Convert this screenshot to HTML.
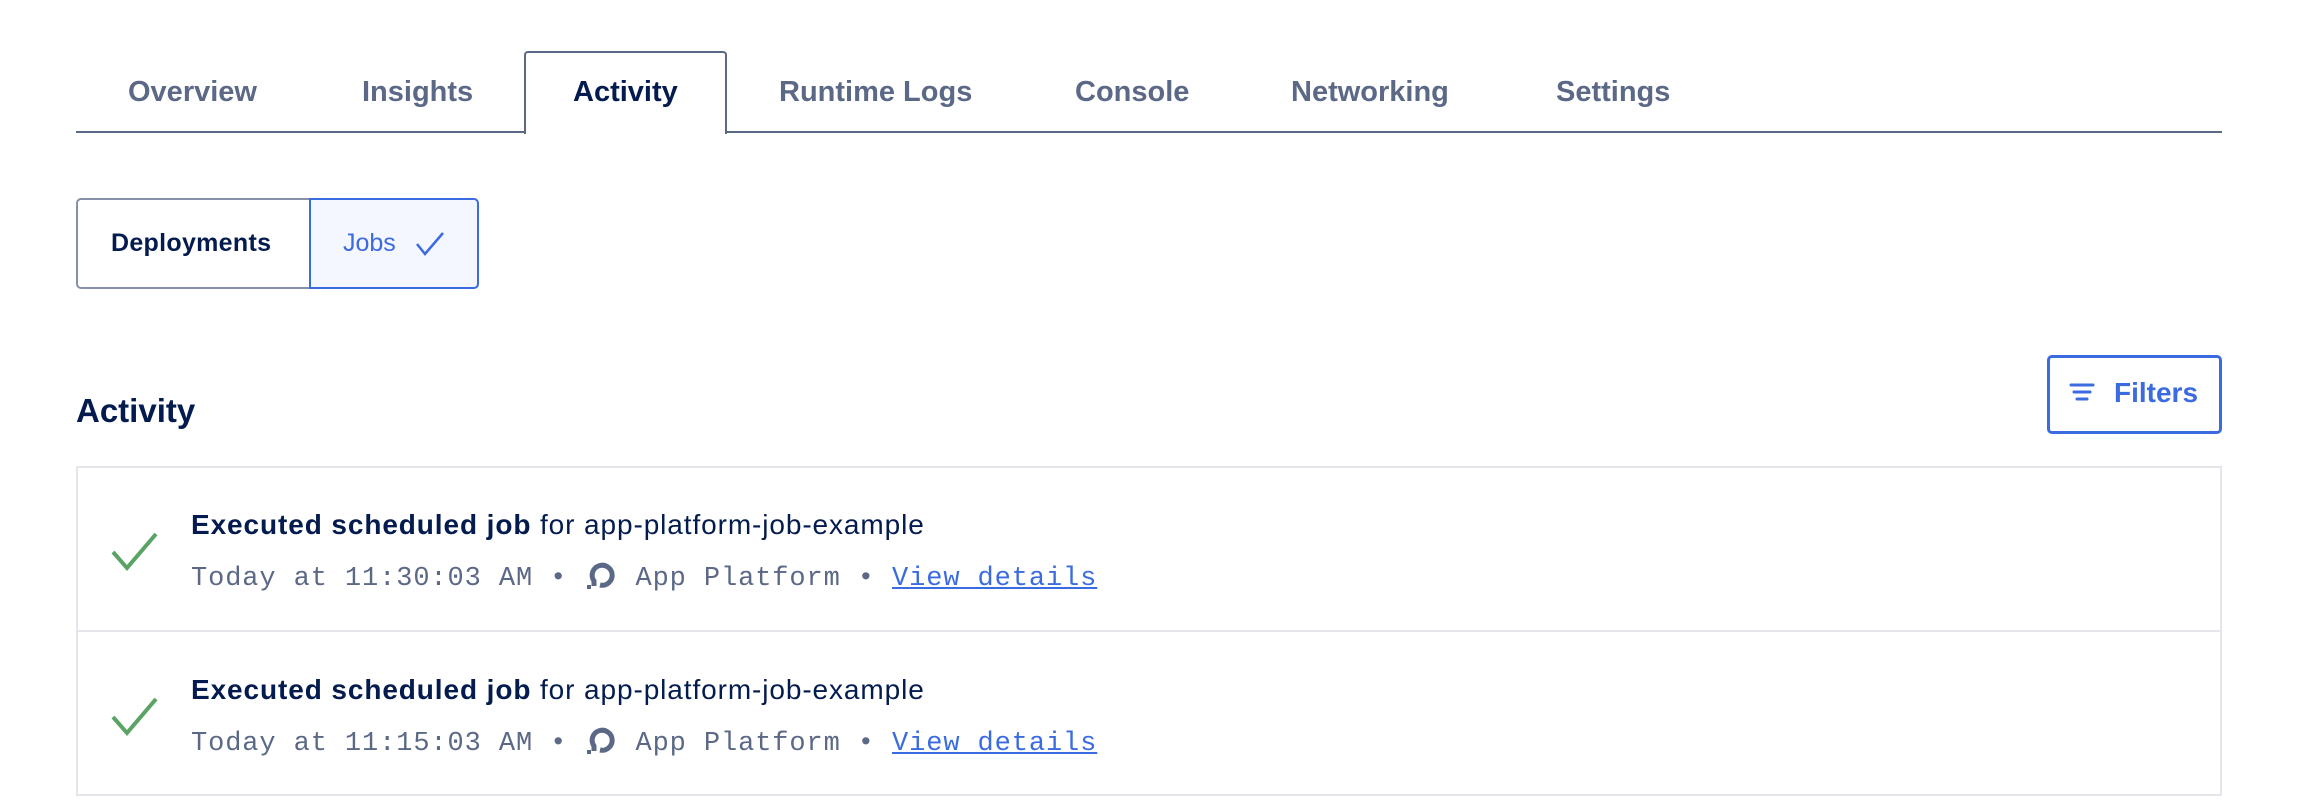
<!DOCTYPE html>
<html><head><style>
*{margin:0;padding:0;box-sizing:border-box}
body{width:2300px;height:800px;background:#fff;font-family:"Liberation Sans",sans-serif;position:relative;overflow:hidden;color:#031b4e}
.abs{position:absolute}
.tab{position:absolute;top:72px;font-size:29px;color:#5b6987;font-weight:bold;line-height:40px;letter-spacing:0px}
.mono{font-family:"Liberation Mono",monospace;font-size:27px;color:#5b6987;letter-spacing:0.9px}
.title{font-size:28px;color:#031b4e;letter-spacing:0.9px}
</style></head><body>
<div class="abs" style="left:76px;top:131px;width:2146px;height:2px;background:#5b6987"></div>
<div class="abs" style="left:524px;top:51px;width:203px;height:83px;border:2px solid #5b6987;border-bottom:none;border-radius:4px 4px 0 0;background:#fff"></div>
<div class="tab" style="left:128px">Overview</div>
<div class="tab" style="left:362px">Insights</div>
<div class="tab" style="left:573px;color:#031b4e">Activity</div>
<div class="tab" style="left:779px">Runtime Logs</div>
<div class="tab" style="left:1075px">Console</div>
<div class="tab" style="left:1291px">Networking</div>
<div class="tab" style="left:1556px">Settings</div>

<div class="abs" style="left:76px;top:198px;width:235px;height:91px;border:2px solid #8690a8;border-right:none;border-radius:5px 0 0 5px"></div>
<div class="abs" style="left:309px;top:198px;width:170px;height:91px;border:2px solid #3b6be0;border-radius:0 5px 5px 0;background:#f4f7ff"></div>
<div class="abs" style="left:111px;top:229px;font-size:25px;font-weight:bold;color:#031b4e;letter-spacing:0.3px">Deployments</div>
<div class="abs" style="left:343px;top:229px;font-size:25px;color:#3b6be0">Jobs</div>
<svg class="abs" style="left:414px;top:230px" width="32" height="28" viewBox="0 0 32 28"><path d="M3 14 L11 24 L29 3" fill="none" stroke="#3b6be0" stroke-width="2.5"/></svg>

<div class="abs" style="left:76px;top:392px;font-size:33px;font-weight:bold;color:#031b4e">Activity</div>
<div class="abs" style="left:2047px;top:355px;width:175px;height:79px;border:3px solid #3b6be0;border-radius:5px"></div>
<svg class="abs" style="left:2069px;top:382px" width="26" height="22"><path d="M2 3h22M5 10h16M8 17h10" stroke="#3b6be0" stroke-width="3" stroke-linecap="round"/></svg>
<div class="abs" style="left:2114px;top:377px;font-size:28px;font-weight:bold;color:#3b6be0">Filters</div>

<div class="abs" style="left:76px;top:466px;width:2146px;height:330px;border:2px solid #e5e5ec"></div>
<div class="abs" style="left:76px;top:630px;width:2146px;height:2px;background:#e5e5ec"></div>

<div class="abs" style="left:0;top:466px;width:2300px;height:165px">
<svg class="abs" style="left:110px;top:62px" width="50" height="48"><path d="M3 24 L17 40 L46 6" fill="none" stroke="#5aa364" stroke-width="4"/></svg>
<div class="abs title" style="left:191px;top:43px"><b>Executed scheduled job</b> for app-platform-job-example</div>
<div class="abs mono" style="left:191px;top:93px;white-space:pre">Today at 11:30:03 AM • <svg style="vertical-align:-6px" width="34" height="32" viewBox="0 0 34 32"><path d="M10 27 V22 A10 10 0 1 1 16 26 H16" fill="none" stroke="#5b6987" stroke-width="5"/><rect x="3" y="26" width="4" height="4" fill="#5b6987"/></svg> App Platform • <span style="color:#3b6be0;text-decoration:underline">View details</span></div>
</div>
<div class="abs" style="left:0;top:631px;width:2300px;height:165px">
<svg class="abs" style="left:110px;top:62px" width="50" height="48"><path d="M3 24 L17 40 L46 6" fill="none" stroke="#5aa364" stroke-width="4"/></svg>
<div class="abs title" style="left:191px;top:43px"><b>Executed scheduled job</b> for app-platform-job-example</div>
<div class="abs mono" style="left:191px;top:93px;white-space:pre">Today at 11:15:03 AM • <svg style="vertical-align:-6px" width="34" height="32" viewBox="0 0 34 32"><path d="M10 27 V22 A10 10 0 1 1 16 26 H16" fill="none" stroke="#5b6987" stroke-width="5"/><rect x="3" y="26" width="4" height="4" fill="#5b6987"/></svg> App Platform • <span style="color:#3b6be0;text-decoration:underline">View details</span></div>
</div>
</body></html>
